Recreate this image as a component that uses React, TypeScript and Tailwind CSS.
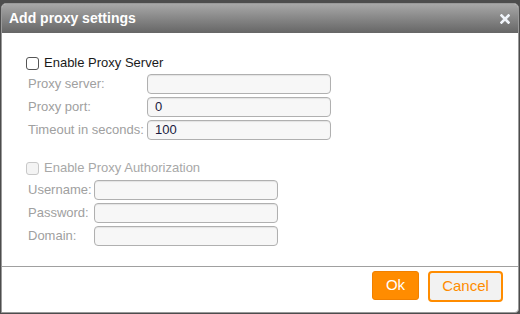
import React from "react";

const font = { fontFamily: '"Liberation Sans", Arial, sans-serif' };

function Row({ label, value, labelW }: { label: string; value?: string; labelW: string }) {
  return (
    <div className="flex items-center h-[23px]">
      <div className={`${labelW} text-[13px] text-[#a0a0a0] shrink-0`}>{label}</div>
      <div className="w-[184px] h-[20px] border border-[#b0b0b0] rounded-[4px] bg-[#f7f7f7] shadow-[inset_0_1px_1px_rgba(0,0,0,0.08)] flex items-center px-[7px] text-[13px] text-[#1a1a40]">
        {value}
      </div>
    </div>
  );
}

export default function App() {
  return (
    <div className="w-[520px] h-[314px] bg-[#4d4d4d] pt-[3px] pl-[1px] pr-[1px] pb-[1px]" style={font}>
      <div className="relative w-full h-full flex flex-col bg-white rounded-t-[5px] rounded-br-[4px] border border-[#9a9a9a] overflow-hidden">
        <div className="h-[29px] shrink-0 bg-gradient-to-b from-[#a8a8a8] to-[#666666] flex items-center justify-between pl-[7px] pr-[8px]">
          <span className="text-white font-bold text-[14px]">Add proxy settings</span>
          <svg width="10" height="10" viewBox="0 0 10 10">
            <path d="M1.5 1.5 L8.5 8.5 M8.5 1.5 L1.5 8.5" stroke="#f0f4fa" strokeWidth="2.6" strokeLinecap="square" />
          </svg>
        </div>
        <div className="flex-1 pl-[24px] pt-[20px]">
          <label className="flex items-center gap-[5px] h-[20px]">
            <span className="w-[13px] h-[13px] border border-[#555] rounded-[3px] bg-white" />
            <span className="text-[13px] text-[#1a1a1a]">Enable Proxy Server</span>
          </label>
          <div className="pl-[2px] -mt-[1px]">
            <Row label="Proxy server:" labelW="w-[119px]" />
            <Row label="Proxy port:" value="0" labelW="w-[119px]" />
            <Row label="Timeout in seconds:" value="100" labelW="w-[119px]" />
          </div>
          <label className="flex items-center gap-[5px] h-[20px] mt-[17px]">
            <span className="w-[13px] h-[13px] border border-[#c8c8c8] rounded-[3px] bg-[#f4f4f4]" />
            <span className="text-[13px] text-[#a8a8a8]">Enable Proxy Authorization</span>
          </label>
          <div className="pl-[2px]">
            <Row label="Username:" labelW="w-[66px]" />
            <Row label="Password:" labelW="w-[66px]" />
            <Row label="Domain:" labelW="w-[66px]" />
          </div>
        </div>
        <div className="h-[46px] shrink-0 border-t border-[#a0a0a0] flex items-start justify-end gap-[9px] pt-[4px] pr-[15px]">
          <button className="w-[47px] h-[29px] bg-[#ff8c00] rounded-[3px] text-white text-[15px] border border-[#f08000]">Ok</button>
          <button className="w-[75px] h-[31px] bg-[#f2f2f2] border-2 border-[#ff8c00] rounded-[4px] text-[#ff8c00] text-[15px]">Cancel</button>
        </div>
      </div>
    </div>
  );
}
